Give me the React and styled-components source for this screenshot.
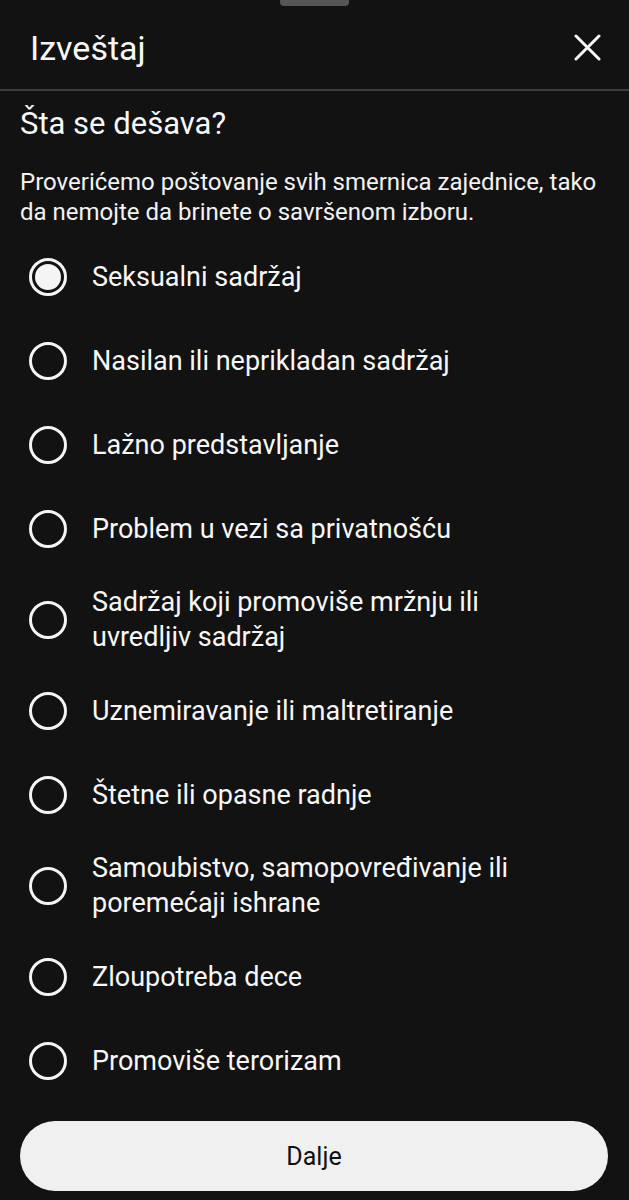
import React, { Component } from 'react';
import styled, { createGlobalStyle } from 'styled-components';

const GlobalStyle = createGlobalStyle`
  body {
    margin: 0;
    background: #121212;
    font-family: Roboto, "Noto Sans", sans-serif;
    color: #f7f7f7;
  }
`;

export const Sheet = styled.div`
  min-height: 1200px;
  background: #121212;
  display: flex;
  flex-direction: column;
`;

export const Grip = styled.div`
  align-self: center;
  width: 69px;
  height: 6px;
  background: #555555;
  border-radius: 0 0 4px 4px;
`;

export const Header = styled.div`
  height: 83px;
  display: flex;
  align-items: center;
  justify-content: space-between;
  padding: 0 28px 0 30px;
  border-bottom: 2px solid #3e3e3e;
`;

export const Title = styled.h1`
  margin: 0;
  font-size: 34px;
  font-weight: 400;
  line-height: 40px;
`;

export const CloseBtn = styled.button`
  width: 28px;
  height: 28px;
  padding: 0;
  border: none;
  background: transparent;
  color: #f7f7f7;
  display: flex;
  align-items: center;
  justify-content: center;
  cursor: pointer;
`;

export const Body = styled.div`
  flex: 1;
  display: flex;
  flex-direction: column;
  padding: 14px 21px 10px 20px;
`;

export const Heading = styled.h2`
  margin: 0;
  font-size: 31px;
  font-weight: 400;
  line-height: 38px;
`;

export const Hint = styled.p`
  margin: 24px 0 0;
  font-size: 24px;
  line-height: 30px;
  color: #f2f2f2;
`;

export const Options = styled.div`
  margin-top: 8px;
  display: flex;
  flex-direction: column;
`;

export const Option = styled.label`
  min-height: 84px;
  box-sizing: border-box;
  padding: 14px 40px 14px 9px;
  display: flex;
  align-items: center;
  gap: 25px;
  cursor: pointer;
`;

export const Radio = styled.span`
  flex: none;
  position: relative;
  width: 38px;
  height: 38px;
  box-sizing: border-box;
  border: 3px solid #f4f4f4;
  border-radius: 50%;

  &::after {
    content: '';
    display: ${p => (p.$checked ? 'block' : 'none')};
    position: absolute;
    inset: 0;
    margin: auto;
    width: 26px;
    height: 26px;
    border-radius: 50%;
    background: #f4f4f4;
  }
`;

export const OptionText = styled.span`
  font-size: 27px;
  line-height: 35px;
`;

export const NextBtn = styled.button`
  margin-top: 18px;
  height: 70px;
  width: 100%;
  border: none;
  border-radius: 35px;
  background: #f0f0f0;
  color: #111111;
  font-family: Roboto, "Noto Sans", sans-serif;
  font-size: 25px;
  cursor: pointer;
`;

const reasons = [
  'Seksualni sadržaj',
  'Nasilan ili neprikladan sadržaj',
  'Lažno predstavljanje',
  'Problem u vezi sa privatnošću',
  'Sadržaj koji promoviše mržnju ili uvredljiv sadržaj',
  'Uznemiravanje ili maltretiranje',
  'Štetne ili opasne radnje',
  'Samoubistvo, samopovređivanje ili poremećaji ishrane',
  'Zloupotreba dece',
  'Promoviše terorizam',
];

class App extends Component {
  state = {
    selected: 0,
  };

  handlePick(i) {
    this.setState({ selected: i });
  }

  render() {
    return (
      <Sheet>
        <GlobalStyle />
        <Grip />
        <Header>
          <Title>Izveštaj</Title>
          <CloseBtn title="Zatvori">
            <svg width="27" height="27" viewBox="0 0 27 27">
              <path d="M2 2L25 25M25 2L2 25" stroke="currentColor" strokeWidth="3" strokeLinecap="round" />
            </svg>
          </CloseBtn>
        </Header>
        <Body>
          <Heading>Šta se dešava?</Heading>
          <Hint>Proverićemo poštovanje svih smernica zajednice, tako da nemojte da brinete o savršenom izboru.</Hint>
          <Options>
            {reasons.map((r, i) => (
              <Option key={r} onClick={this.handlePick.bind(this, i)}>
                <Radio $checked={this.state.selected === i} />
                <OptionText>{r}</OptionText>
              </Option>
            ))}
          </Options>
          <NextBtn>Dalje</NextBtn>
        </Body>
      </Sheet>
    );
  }
}

export default App;
